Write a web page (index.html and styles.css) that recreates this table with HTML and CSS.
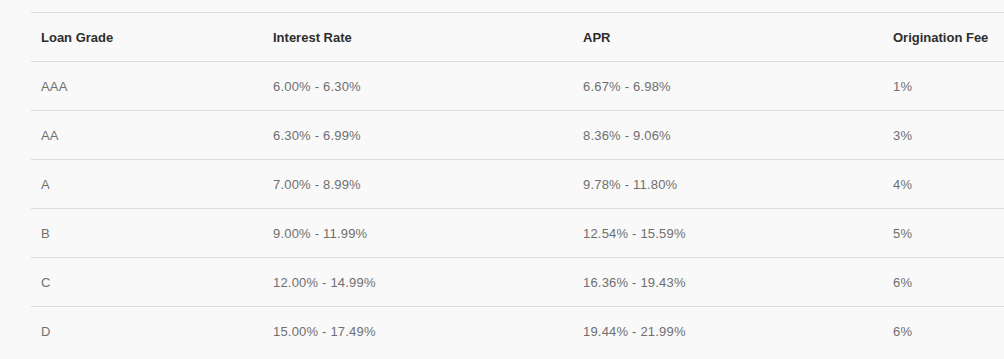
FILE: index.html
```html
<!DOCTYPE html>
<html lang="en">
<head>
<meta charset="utf-8">
<title>Loan Grades</title>
<link rel="stylesheet" href="styles.css">
</head>
<body>
<div class="rates">
  <div class="row head">
    <div class="cell">Loan Grade</div>
    <div class="cell">Interest Rate</div>
    <div class="cell">APR</div>
    <div class="cell">Origination Fee</div>
  </div>
  <div class="row">
    <div class="cell">AAA</div>
    <div class="cell">6.00% - 6.30%</div>
    <div class="cell">6.67% - 6.98%</div>
    <div class="cell">1%</div>
  </div>
  <div class="row">
    <div class="cell">AA</div>
    <div class="cell">6.30% - 6.99%</div>
    <div class="cell">8.36% - 9.06%</div>
    <div class="cell">3%</div>
  </div>
  <div class="row">
    <div class="cell">A</div>
    <div class="cell">7.00% - 8.99%</div>
    <div class="cell">9.78% - 11.80%</div>
    <div class="cell">4%</div>
  </div>
  <div class="row">
    <div class="cell">B</div>
    <div class="cell">9.00% - 11.99%</div>
    <div class="cell">12.54% - 15.59%</div>
    <div class="cell">5%</div>
  </div>
  <div class="row">
    <div class="cell">C</div>
    <div class="cell">12.00% - 14.99%</div>
    <div class="cell">16.36% - 19.43%</div>
    <div class="cell">6%</div>
  </div>
  <div class="row">
    <div class="cell">D</div>
    <div class="cell">15.00% - 17.49%</div>
    <div class="cell">19.44% - 21.99%</div>
    <div class="cell">6%</div>
  </div>
</div>
</body>
</html>
```
FILE: styles.css
```css
html, body {
  margin: 0;
  padding: 0;
  background: #f9f9f9;
}
body {
  font-family: "Liberation Sans", Arial, Helvetica, sans-serif;
  font-size: 13px;
  color: #6f6f6f;
  overflow: hidden;
}
.rates {
  padding: 12px 0 0 31px;
}
.row {
  display: grid;
  grid-template-columns: 232px 310px 310px 1fr;
  height: 48px;
  border-top: 1px solid #dcdcdc;
  align-items: center;
}
.cell {
  padding-left: 10px;
  letter-spacing: 0.2px;
  white-space: nowrap;
  line-height: 16px;
  padding-top: 1px;
}
.head .cell {
  font-weight: bold;
  color: #2e2e2e;
  letter-spacing: 0;
}
```
